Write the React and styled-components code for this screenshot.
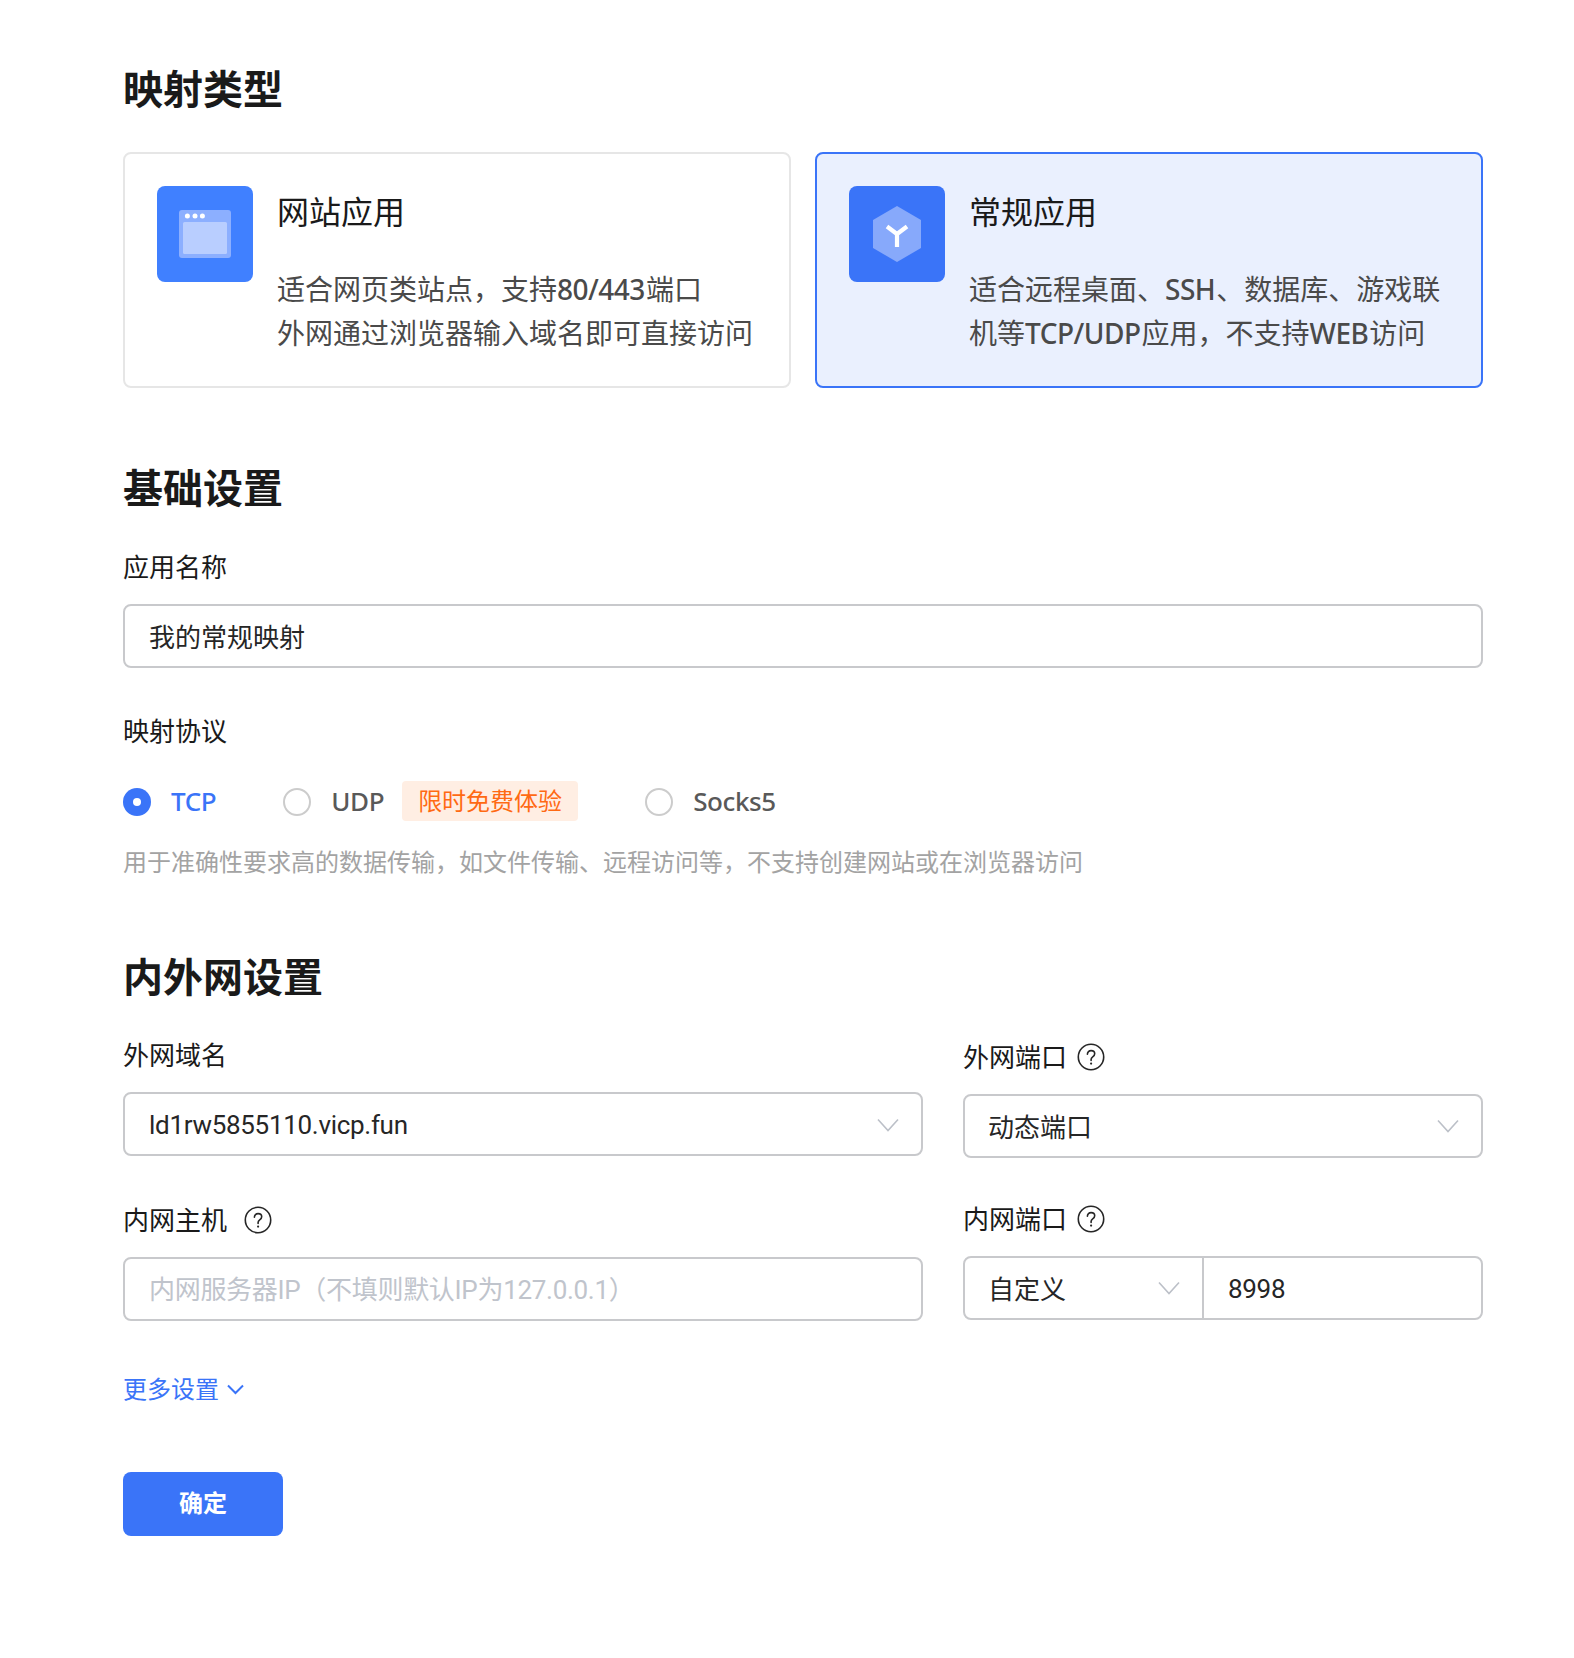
import React from "react";
import styled, { createGlobalStyle, css } from "styled-components";

const FONT = `"Noto Sans", "Noto Sans CJK SC", sans-serif`;
const LATIN = `Roboto, "Noto Sans CJK SC", sans-serif`;

const latinText = css`
  font-family: ${LATIN};
  letter-spacing: -0.3px;
  padding-top: 2px;
`;

const Global = createGlobalStyle`
  * { box-sizing: border-box; }
  html, body { margin: 0; padding: 0; background: #fff; }
  body { font-family: ${FONT}; color: #1a1a1a; }
`;

const Page = styled.main`
  width: 1360px;
  margin-left: 123px;
  padding: 61px 0 122px;
`;

const Heading = styled.h2`
  margin: ${(p) => p.$top || 0}px 0 0;
  font-size: 40px;
  line-height: 56px;
  font-weight: 700;
  color: #1a1a1a;
`;

const Cards = styled.div`
  display: grid;
  grid-template-columns: 668px 668px;
  gap: 24px;
  margin-top: 35px;
`;

const Card = styled.div`
  display: flex;
  gap: 24px;
  height: 236px;
  padding: 32px;
  border: 2px solid ${(p) => (p.$active ? "#3a74f8" : "#e6e6e6")};
  border-radius: 8px;
  background: ${(p) => (p.$active ? "#eaf0fe" : "#fff")};
`;

const CardIcon = styled.svg`
  flex: none;
  width: 96px;
  height: 96px;
`;

const CardBody = styled.div`
  min-width: 0;
  padding-top: 4px;
`;

const CardTitle = styled.div`
  font-size: 32px;
  line-height: 44px;
  color: #1a1a1a;
  margin-bottom: 34px;
`;

const CardText = styled.div`
  font-size: 28px;
  line-height: 43.5px;
  color: #4a4a4a;
`;

const Term = styled.span`
  display: inline-block;
  font-weight: 500;
  letter-spacing: -0.5px;
  padding-right: 1px;
`;

const Label = styled.div`
  display: flex;
  align-items: center;
  gap: ${(p) => p.$gap || 10}px;
  margin-top: ${(p) => p.$top || 0}px;
  font-size: 26px;
  line-height: 36px;
  height: 36px;
  color: #1a1a1a;
`;

const HelpIcon = styled.svg`
  flex: none;
  width: 28px;
  height: 28px;
`;

const Box = styled.div`
  display: flex;
  align-items: center;
  height: 64px;
  margin-top: 19px;
  border: 2px solid #c8c9cc;
  border-radius: 8px;
  background: #fff;
`;

const TextInput = styled.input`
  flex: 1;
  min-width: 0;
  height: 100%;
  padding: 0 24px;
  border: 0;
  outline: 0;
  background: transparent;
  font: 400 26px/36px ${FONT};
  color: #262626;
  ${(p) => p.$latin && latinText}
  &::placeholder {
    color: #c0c4cc;
    opacity: 1;
  }
`;

const SelectPart = styled.div`
  display: flex;
  align-items: center;
  justify-content: space-between;
  height: 100%;
  width: ${(p) => p.$width || "100%"};
  flex: none;
  padding: 0 22px 0 ${(p) => (p.$latin ? 24 : 23)}px;
  font-size: 26px;
  color: #262626;
  border-right: ${(p) => (p.$divided ? "2px solid #c8c9cc" : "0")};
  ${(p) => p.$latin && latinText}
`;

const Chevron = styled.svg`
  flex: none;
  width: 22px;
  height: 14px;
`;

const RadioRow = styled.div`
  display: flex;
  align-items: center;
  height: 40px;
  margin-top: 32px;
  font-size: 26px;
  font-weight: 500;
  letter-spacing: -0.4px;
`;

const RadioItem = styled.div`
  display: flex;
  align-items: center;
  gap: 20px;
  margin-left: ${(p) => p.$left || 0}px;
  color: ${(p) => (p.$active ? "#3a74f8" : "#595959")};
`;

const RadioDot = styled.span`
  position: relative;
  display: block;
  flex: none;
  width: 28px;
  height: 28px;
  margin-top: 2px;
  border-radius: 50%;
  background: ${(p) => (p.$active ? "#3a74f8" : "#fff")};
  border: ${(p) => (p.$active ? "0" : "2px solid #cccccc")};
  &::after {
    content: "";
    display: ${(p) => (p.$active ? "block" : "none")};
    position: absolute;
    left: 10px;
    top: 10px;
    width: 8px;
    height: 8px;
    border-radius: 50%;
    background: #fff;
  }
`;

const Badge = styled.span`
  display: block;
  width: 176px;
  height: 40px;
  margin-left: 18px;
  border-radius: 4px;
  background: #ffeee3;
  color: #ff6a13;
  font-size: 24px;
  font-weight: 400;
  letter-spacing: 0;
  line-height: 40px;
  text-align: center;
`;

const Hint = styled.div`
  margin-top: 23px;
  font-size: 24px;
  line-height: 36px;
  color: #a3a3a3;
`;

const Columns = styled.div`
  display: grid;
  grid-template-columns: 800px 520px;
  column-gap: 40px;
`;

const Column = styled.div`
  min-width: 0;
`;

const More = styled.div`
  display: flex;
  align-items: center;
  gap: 8px;
  margin-top: 50px;
  font-size: 24px;
  line-height: 36px;
  color: #3a74f8;
`;

const MoreChevron = styled.svg`
  width: 17px;
  height: 11px;
`;

const Submit = styled.button`
  display: block;
  width: 160px;
  height: 64px;
  margin-top: 65px;
  padding: 0 0 2px;
  border: 0;
  border-radius: 8px;
  background: #3a74f8;
  color: #fff;
  font: 700 24px/56px ${FONT};
`;

const Help = () => (
  <HelpIcon viewBox="0 0 28 28" fill="none" stroke="#262626" strokeWidth="1.6">
    <circle cx="14" cy="14" r="12.7" />
    <path d="M10.4 11.2c0-2.2 1.6-3.6 3.7-3.6s3.6 1.3 3.6 3.2c0 1.5-.8 2.3-2 3.1-1 .7-1.6 1.3-1.6 2.6v.9" strokeLinecap="round" />
    <circle cx="14.1" cy="20.6" r="1.1" fill="#262626" stroke="none" />
  </HelpIcon>
);

const Down = () => (
  <Chevron viewBox="0 0 22 14" fill="none" stroke="#bcc0c8" strokeWidth="1.6">
    <path d="M1 1.5l10 11 10-11" />
  </Chevron>
);

export default function App() {
  return (
    <Page>
      <Global />
      <Heading>映射类型</Heading>
      <Cards>
        <Card>
          <CardIcon viewBox="0 0 96 96">
            <rect width="96" height="96" rx="8" fill="#4080ff" />
            <rect x="22" y="24" width="52" height="48" rx="3" fill="#8cafff" />
            <rect x="26" y="36" width="44" height="32" rx="1.5" fill="#b9ceff" />
            <circle cx="30.4" cy="30" r="2.5" fill="#fff" />
            <circle cx="38" cy="30" r="2.5" fill="#fff" />
            <circle cx="45.4" cy="30" r="2.5" fill="#fff" />
          </CardIcon>
          <CardBody>
            <CardTitle>网站应用</CardTitle>
            <CardText>
              适合网页类站点，支持<Term>80/443</Term>端口
              <br />
              外网通过浏览器输入域名即可直接访问
            </CardText>
          </CardBody>
        </Card>
        <Card $active>
          <CardIcon viewBox="0 0 96 96">
            <rect width="96" height="96" rx="8" fill="#3a74f8" />
            <path d="M48 20l24 14v28L48 76 24 62V34z" fill="#87a9fb" />
            <path d="M38 40.5l10 7.5 10-7.5M48 48v13" fill="none" stroke="#fff" strokeWidth="4.2" />
          </CardIcon>
          <CardBody>
            <CardTitle>常规应用</CardTitle>
            <CardText>
              适合远程桌面、<Term>SSH</Term>、数据库、游戏联
              <br />
              机等<Term>TCP/UDP</Term>应用，不支持<Term>WEB</Term>访问
            </CardText>
          </CardBody>
        </Card>
      </Cards>

      <Heading $top={72}>基础设置</Heading>
      <Label $top={33}>应用名称</Label>
      <Box>
        <TextInput defaultValue="我的常规映射" />
      </Box>
      <Label $top={45}>映射协议</Label>
      <RadioRow>
        <RadioItem $active>
          <RadioDot $active />
          TCP
        </RadioItem>
        <RadioItem $left={67}>
          <RadioDot />
          UDP
        </RadioItem>
        <Badge>限时免费体验</Badge>
        <RadioItem $left={67}>
          <RadioDot />
          Socks5
        </RadioItem>
      </RadioRow>
      <Hint>用于准确性要求高的数据传输，如文件传输、远程访问等，不支持创建网站或在浏览器访问</Hint>

      <Heading $top={69}>内外网设置</Heading>
      <Columns>
        <Column>
          <Label $top={32}>外网域名</Label>
          <Box>
            <SelectPart $latin>
              ld1rw5855110.vicp.fun
              <Down />
            </SelectPart>
          </Box>
          <Label $top={46} $gap={17}>
            内网主机
            <Help />
          </Label>
          <Box>
            <TextInput $latin placeholder="内网服务器IP（不填则默认IP为127.0.0.1）" />
          </Box>
        </Column>
        <Column>
          <Label $top={34}>
            外网端口
            <Help />
          </Label>
          <Box>
            <SelectPart>
              动态端口
              <Down />
            </SelectPart>
          </Box>
          <Label $top={43}>
            内网端口
            <Help />
          </Label>
          <Box>
            <SelectPart $width="239px" $divided>
              自定义
              <Down />
            </SelectPart>
            <TextInput $latin defaultValue="8998" />
          </Box>
        </Column>
      </Columns>

      <More>
        更多设置
        <MoreChevron viewBox="0 0 17 11" fill="none" stroke="#3a74f8" strokeWidth="2">
          <path d="M1 1.5l7.5 7.5 7.5-7.5" />
        </MoreChevron>
      </More>
      <Submit>确定</Submit>
    </Page>
  );
}
